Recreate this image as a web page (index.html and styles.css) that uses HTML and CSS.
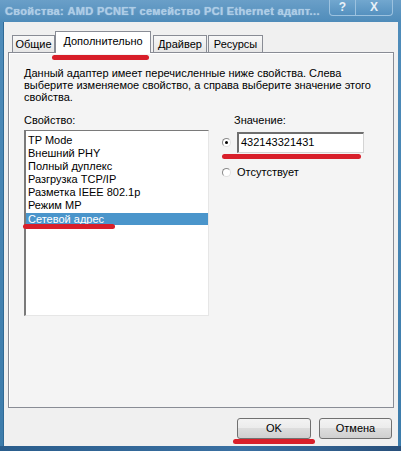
FILE: index.html
```html
<!DOCTYPE html>
<html>
<head>
    <title>Свойства</title>
    <link rel="stylesheet" href="styles.css">
</head>
<body>

<div class="window">
    <div class="titlebar">
        <span class="title">Свойства: AMD PCNET семейство PCI Ethernet адапт...</span>
        <div class="caption">
            <span class="cbtn help">?</span>
            <span class="cbtn close">X</span>
        </div>
    </div>

    <div class="client">
        <div class="tabs">
            <span class="tab t1">Общие</span>
            <span class="tab active">Дополнительно<i class="mark tabmark"></i></span>
            <span class="tab t3">Драйвер</span>
            <span class="tab t4">Ресурсы</span>
        </div>

        <div class="panel">
            <p class="intro">Данный адаптер имеет перечисленные ниже свойства. Слева
            выберите изменяемое свойство, а справа выберите значение этого
            свойства.</p>

            <div class="cols">
                <div class="left">
                    <div class="label">Свойство:</div>
                    <div class="list">
                        <div class="item">TP Mode</div>
                        <div class="item">Внешний PHY</div>
                        <div class="item">Полный дуплекс</div>
                        <div class="item">Разгрузка TCP/IP</div>
                        <div class="item">Разметка IEEE 802.1p</div>
                        <div class="item">Режим MP</div>
                        <div class="item selected">Сетевой адрес<i class="mark listmark"></i></div>
                    </div>
                </div>

                <div class="right">
                    <div class="label vlabel">Значение:</div>
                    <div class="row first">
                        <span class="radio on"></span>
                        <span class="edit">432143321431</span>
                        <i class="mark editmark"></i>
                    </div>
                    <div class="row second">
                        <span class="radio"></span>
                        <span class="rtext">Отсутствует</span>
                    </div>
                </div>
            </div>
        </div>

        <div class="buttons">
            <span class="btn ok">OK<i class="mark okmark"></i></span>
            <span class="btn">Отмена</span>
        </div>
    </div>
    <div class="taskbar"></div>
</div>

</body>
</html>
```

FILE: styles.css
```css
html, body {
    margin : 0;
    padding : 0;
}
body {
    width : 401px;
    height : 451px;
    overflow : hidden;
    background : #3f7eab;
    font-family : "Liberation Sans", Arial, sans-serif;
    font-size : 11px;
    color : #000;
}
.window {
    height : 451px;
    display : flex;
    flex-direction : column;
    background : linear-gradient(#6a9fc8, #4f8cba 22px, #3d7cab);
}
.titlebar {
    height : 22px;
    flex : none;
    padding-left : 5px;
    position : relative;
}
.title {
    display : block;
    padding-top : 5px;
    font-weight : bold;
    font-size : 11px;
    letter-spacing : 0.35px;
    color : #aecde6;
    white-space : nowrap;
    text-shadow : 0 0 1px #aecde6;
}
.caption {
    position : absolute;
    left : 329px;
    top : 0;
    display : flex;
    border : 1px solid #9cc2df;
    border-top : none;
    border-radius : 0 0 4px 4px;
    background : linear-gradient(#72a7cf, #5591bf);
}
.cbtn {
    height : 15px;
    line-height : 14px;
    text-align : center;
    color : #e8f1f8;
    font-weight : bold;
    font-size : 12px;
}
.help {
    width : 25px;
    border-right : 1px solid #9cc2df;
}
.close {
    width : 36px;
}
.client {
    flex : none;
    height : 424px;
    margin : 0 3px;
    background : #f0f0f0;
    box-shadow : inset 1px 0 0 #2f6a96;
    padding : 9px 4px 0 5px;
    box-sizing : border-box;
    position : relative;
}
.tabs {
    display : flex;
    align-items : flex-end;
    height : 21px;
    margin-left : 4px;
    position : relative;
    z-index : 1;
}
.tab {
    box-sizing : border-box;
    height : 17px;
    line-height : 16px;
    text-align : center;
    border : 1px solid #898c95;
    border-bottom : none;
    background : linear-gradient(#f8f8f8, #e6e6e6);
    font-size : 11px;
    position : relative;
}
.t1 {
    width : 43px;
}
.t3 {
    width : 54px;
    margin-left : 2px;
}
.t4 {
    width : 55px;
    margin-left : 1px;
}
.tab.active {
    width : 96px;
    height : 22px;
    line-height : 18px;
    margin-bottom : -1px;
    background : #fff;
}
.panel {
    box-sizing : border-box;
    height : 356px;
    border : 1px solid #898c95;
    box-shadow : inset 1px 1px 0 #fff;
    background : #f4f4f4;
    padding : 14px 15px 0 15px;
}
.intro {
    margin : 0;
    line-height : 12px;
    font-size : 11px;
}
.cols {
    display : flex;
    margin-top : 10px;
}
.left {
    width : 185px;
}
.label {
    height : 14px;
    line-height : 14px;
}
.list {
    box-sizing : border-box;
    margin-top : 3px;
    height : 186px;
    padding-top : 3px;
    background : #fff;
    border : 1px solid #7a7a7a;
    border-right-color : #e6e6e6;
    border-bottom-color : #e6e6e6;
    border-left-width : 2px;
}
.item {
    height : 13px;
    line-height : 12px;
    padding-left : 2px;
    font-size : 11px;
    position : relative;
}
.item.selected {
    height : 12px;
    margin-top : 1px;
    background : #4a95cb;
    color : #fff;
}
.right {
    padding-left : 13px;
    width : 150px;
}
.vlabel {
    padding-left : 12px;
}
.row {
    display : flex;
    align-items : center;
    position : relative;
}
.row.first {
    margin-top : 5px;
}
.row.second {
    margin-top : 12px;
}
.radio {
    box-sizing : border-box;
    flex : none;
    width : 9px;
    height : 9px;
    border-radius : 50%;
    border : 1px solid #8a8a8a;
    border-right-color : #e0e0e0;
    border-bottom-color : #e0e0e0;
    background : #fff;
    margin-right : 6px;
    position : relative;
}
.radio.on::after {
    content : "";
    position : absolute;
    left : 2px;
    top : 2px;
    width : 3px;
    height : 3px;
    border-radius : 50%;
    background : #000;
}
.edit {
    box-sizing : border-box;
    width : 127px;
    height : 21px;
    line-height : 17px;
    padding-left : 2px;
    border : 1px solid #d4d4d4;
    border-left : 2px solid #6f6f6f;
    border-top : 2px solid #6f6f6f;
    background : #fff;
    font-size : 11px;
}
.rtext {
    font-size : 11px;
    line-height : 14px;
}
.buttons {
    display : flex;
    justify-content : flex-end;
    gap : 8px;
    padding : 10px 2px 0 0;
}
.btn {
    box-sizing : border-box;
    width : 73px;
    height : 21px;
    line-height : 19px;
    text-align : center;
    border : 1px solid #707070;
    border-radius : 3px;
    background : linear-gradient(#f3f3f3, #ebebeb 50%, #dddddd 50%, #cfcfcf);
    position : relative;
    font-size : 11px;
}
.btn.ok {
    width : 74px;
}
.taskbar {
    flex : 1;
    background : linear-gradient(90deg, #2a5d8c, #3a70a2 60%, #284f7a);
}

/* red marks drawn over the screenshot */
.mark {
    position : absolute;
    display : block;
    height : 5px;
    border-radius : 3px;
    background : #d81f2a;
}
.tabmark {
    left : -4px;
    right : 1px;
    bottom : -7px;
}
.listmark {
    left : -3px;
    width : 92px;
    bottom : -4px;
}
.editmark {
    left : 0;
    width : 139px;
    bottom : -6px;
}
.okmark {
    left : -5px;
    right : -5px;
    bottom : -6px;
}
```
